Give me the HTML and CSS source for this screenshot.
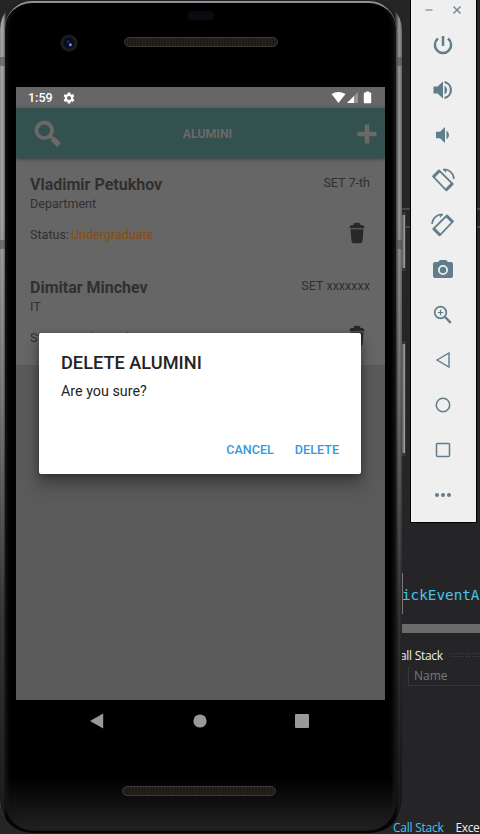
FILE: index.html
```html
<!DOCTYPE html>
<html lang="en">
<head>
<meta charset="utf-8">
<title>Alumini</title>
<link rel="stylesheet" href="styles.css">
</head>
<body>
<main class="desktop">
  <section class="ide">
    <div class="ide-band"></div>
    <div class="editor"><code>ickEventA</code></div>
    <div class="splitter"></div>
    <div class="panel-title"><span>all Stack</span><i class="grip"></i></div>
    <div class="panel-head"><span>Name</span></div>
    <div class="panel-body"></div>
    <div class="tabs"><span class="tab-on">Call Stack</span><span>Exce</span></div>
  </section>

  <section class="phone">
    <i class="side-key power-key"></i>
    <i class="side-key volume-key"></i>
    <div class="shell">
      <div class="face">
        <header class="forehead">
          <i class="sensor"></i>
          <svg class="camera" viewBox="0 0 18 18"><circle cx="9" cy="9" r="8.6" fill="#1b1b1d"/><circle cx="9" cy="9" r="5.4" fill="#08091c"/><circle cx="8" cy="7.5" r="1.5" fill="#172576"/><circle cx="10.3" cy="10.7" r="1.7" fill="#4862cf"/><circle cx="10.5" cy="11" r=".8" fill="#a9c0ff"/></svg>
          <i class="speaker"></i>
        </header>

        <div class="screen">
          <div class="status-bar">
            <span>1:59</span>
            <svg class="gear" viewBox="0 0 24 24"><path fill="#fff" fill-rule="evenodd" d="M9.500 1h5l.6 3.200 2 1.200 3.100-1.200 2.500 4.400-2.500 2v2.800l2.500 2-2.500 4.400-3.100-1.200-2 1.200-.6 3.200h-5l-.6-3.200-2-1.200-3.100 1.200-2.500-4.400 2.500-2v-2.800l-2.500-2 2.500-4.400 3.100 1.200 2-1.200zM12 8a4 4 0 1 0 0 8 4 4 0 0 0 0-8z"/></svg>
            <svg class="signals" viewBox="0 0 42 14"><path fill="#fff" d="M.5 3.100Q7.500-1.300 14.500 3.100L7.500 12z"/><path fill="#949494" d="M27 1v11H16z"/><path fill="#fff" d="M23 5v7h-7z"/><path fill="#fff" d="M35 1.500V.500h3v1h1.500q.7 0 .7.700v9.300q0 .7-.7.700h-6q-.7 0-.7-.7V2.200q0-.7.7-.7z"/></svg>
          </div>
          <div class="app-bar">
            <svg class="search" viewBox="0 0 28 28"><circle cx="10.300" cy="10.300" r="7.800" fill="none" stroke="#6c6868" stroke-width="3.800"/><path d="M16 16l2.500 2.500" stroke="#6c6868" stroke-width="3"/><path d="M18.500 18.500l6.500 6.500" stroke="#6c6868" stroke-width="5.400"/></svg>
            <h1>ALUMINI</h1>
            <svg class="plus" viewBox="0 0 20 20"><path d="M10 .5v19M.5 10h19" stroke="#6c6868" stroke-width="4.600"/></svg>
          </div>
          <div class="list">
            <article class="card">
              <div class="line"><h2>Vladimir Petukhov</h2><span>SET 7-th</span></div>
              <p>Department</p>
              <div class="line state"><p>Status:<b>Undergraduate</b></p>
                <svg class="trash" viewBox="0 0 16 22"><path fill="#282828" d="M4.500 3q0-2.300 1.800-2.300h3.400q1.800 0 1.800 2.300h2Q15.500 3.500 15.500 6.300H.5Q.5 3.500 2.500 3zM1.500 7.200h13l-1 12q-.2 2-2.200 2H4.700q-2 0-2.200-2z"/></svg></div>
            </article>
            <article class="card">
              <div class="line"><h2>Dimitar Minchev</h2><span>SET xxxxxxx</span></div>
              <p>IT</p>
              <div class="line state"><p>Status:<b class="plain">Undergraduate</b></p>
                <svg class="trash" viewBox="0 0 16 22"><path fill="#282828" d="M4.500 3q0-2.300 1.800-2.300h3.400q1.800 0 1.800 2.300h2Q15.500 3.500 15.500 6.300H.5Q.5 3.500 2.500 3zM1.500 7.200h13l-1 12q-.2 2-2.200 2H4.700q-2 0-2.200-2z"/></svg></div>
            </article>
          </div>
          <div class="dialog">
            <h3>DELETE ALUMINI</h3>
            <p>Are you sure?</p>
            <div class="actions"><button>CANCEL</button><button>DELETE</button></div>
          </div>
        </div>

        <nav class="nav">
          <svg viewBox="0 0 16 16"><path fill="#999" d="M1 8L14.200.500v15z"/></svg>
          <svg viewBox="0 0 16 16"><circle cx="8" cy="8" r="6.600" fill="#999"/></svg>
          <svg viewBox="0 0 16 16"><rect x="1" y="1" width="14" height="14" rx="1" fill="#999"/></svg>
        </nav>
        <footer class="chin"><i class="speaker"></i></footer>
      </div>
    </div>
  </section>

  <aside class="tools">
    <div class="win">
      <svg viewBox="0 0 10 10"><path d="M1.500 5h7" stroke="#8ba1ab" stroke-width="1.500"/></svg>
      <svg viewBox="0 0 10 10"><path d="M1.500 1.500l7 7m0-7l-7 7" stroke="#6a8491" stroke-width="1.400"/></svg>
    </div>
    <svg class="tool" viewBox="0 0 24 24"><g fill="none" stroke="#607d8b" stroke-width="2.500"><path d="M12 3v10M7 5.600a8.100 8.100 0 1 0 10 0"/></g></svg>
    <svg class="tool" viewBox="0 0 24 24"><path fill="#607d8b" d="M2.500 8.500h4L12 3.500v17l-5.500-5h-4z"/><path fill="#607d8b" d="M13.500 7.700a4.800 4.800 0 0 1 0 8.600z"/><path d="M13.500 4a8.200 8.200 0 0 1 0 16" fill="none" stroke="#607d8b" stroke-width="2.200"/></svg>
    <svg class="tool" viewBox="0 0 24 24"><path fill="#607d8b" d="M5 8.700h4l5-4.700v16l-5-4.700H5zM15.500 7.700a5 5 0 0 1 0 8.600z"/></svg>
    <svg class="tool" viewBox="0 0 24 24"><g fill="none" stroke="#607d8b"><path stroke-width="1.800" d="M2.200 8.500l6-6L21.500 15.800l-6.300 6.500z"/><path stroke-width="3" d="M2.500 8.800l6-6M15 22l6.500-6.500"/><path stroke-width="1.500" d="M12 1.700C18 1 22.500 5 23 11"/></g><path fill="#607d8b" d="M15.500.7L12 1l3 4z"/></svg>
    <svg class="tool flip" viewBox="0 0 24 24"><g fill="none" stroke="#607d8b"><path stroke-width="1.800" d="M2.200 8.500l6-6L21.500 15.800l-6.300 6.500z"/><path stroke-width="3" d="M2.500 8.800l6-6M15 22l6.500-6.500"/><path stroke-width="1.500" d="M12 1.700C18 1 22.500 5 23 11"/></g><path fill="#607d8b" d="M15.500.7L12 1l3 4z"/></svg>
    <svg class="tool" viewBox="0 0 24 24"><path fill="#607d8b" fill-rule="evenodd" d="M9 2h6l2 2h3q2 0 2 2v12q0 2-2 2H4q-2 0-2-2V6q0-2 2-2h3zM12 7a5 5 0 1 0 0 10 5 5 0 0 0 0-10z"/><circle cx="12" cy="12" r="3.200" fill="#607d8b"/></svg>
    <svg class="tool" viewBox="0 0 24 24"><g fill="none" stroke="#607d8b"><circle cx="9.500" cy="9.500" r="5.800" stroke-width="1.700"/><path stroke-width="1.200" d="M9.500 6.700v5.600M6.700 9.500h5.600"/><path stroke-width="2.400" d="M14 14l5.800 5.800"/></g></svg>
    <svg class="tool" viewBox="0 0 24 24"><path d="M6 12L18 5v14z" fill="none" stroke="#607d8b" stroke-width="1.400"/></svg>
    <svg class="tool" viewBox="0 0 24 24"><circle cx="12" cy="12" r="6.700" fill="none" stroke="#607d8b" stroke-width="1.500"/></svg>
    <svg class="tool" viewBox="0 0 24 24"><rect x="5.500" y="5.500" width="13" height="13" rx="1" fill="none" stroke="#607d8b" stroke-width="1.500"/></svg>
    <svg class="tool" viewBox="0 0 24 24"><g fill="#607d8b"><circle cx="6" cy="12" r="2"/><circle cx="12" cy="12" r="2"/><circle cx="18" cy="12" r="2"/></g></svg>
  </aside>
</main>
</body>
</html>
```
FILE: styles.css
```css
* { box-sizing: border-box; }
body { margin: 0; background: #252528; font-family: Roboto, sans-serif; }
h1, h2, h3, p { margin: 0; font-weight: 400; }
i { display: block; }
svg { display: block; flex: none; }

.desktop { position: relative; width: 480px; height: 834px; overflow: hidden; background: #252528; }

/* windows on the desktop */
.ide { position: absolute; inset: 0; padding-left: 402px; display: flex; flex-direction: column; font: 12px "Open Sans", sans-serif; color: #ededed; }
.ide-band { height: 20px; margin-top: 208px; border-top: 2px solid #3b4b57; border-bottom: 2px solid #3b4b57; flex: none; }
.editor { height: 41px; margin-top: 345px; border-left: 1px solid #77777a; display: flex; align-items: center; flex: none; }
.editor code { font: 14.300px/20px "DejaVu Sans Mono", monospace; color: #45c5ee; white-space: nowrap; padding-top: 2px; margin-left: -1px; }
.splitter { height: 9px; margin-top: 10px; background: #6b6b6c; flex: none; }
.panel-title { height: 34px; padding-top: 10px; display: flex; align-items: center; gap: 7px; letter-spacing: -.3px; margin-left: -2px; white-space: nowrap; }
.grip { flex: 1; height: 6px; background: radial-gradient(circle, #4a4a4d .7px, transparent .9px) 0 0 / 3px 3px; }
.panel-head { height: 19px; margin-left: 6px; padding-left: 5px; border-left: 1px solid #38383b; border-bottom: 1px solid #38383b; color: #78787a; line-height: 18px; }
.panel-body { height: 86px; border-left: 1px solid transparent; }
.tabs { height: 62px; margin-left: -9px; padding-top: 50px; display: flex; gap: 12px; letter-spacing: -.25px; line-height: 12px; white-space: nowrap; }
.tabs span:last-child { letter-spacing: -.4px; }
.tab-on { color: #45c5ee; }

.phone { position: absolute; left: 0; top: 0; width: 406px; height: 834px; }
.shell { position: relative; width: 402px; height: 833px; padding: 1px 6px 2px 5px; border-radius: 29px 30px 32px 32px; background: linear-gradient(90deg, #8a8a8a 0, #aaa 2px, #8a8a8a 4px, #222 6px, #222 395px, #5c5c5c 397px, #999 399px, #666 402px); overflow: hidden; }
.shell::before { content: ""; position: absolute; inset: 0; background: linear-gradient(transparent 0, transparent 210px, rgba(0,0,0,.25) 400px, rgba(0,0,0,.65) 610px, rgba(0,0,0,.85) 834px); }
.shell::after { content: ""; position: absolute; inset: 57px 0 auto; height: 174px; border: solid #444; border-width: 9px 0; opacity: .5; clip-path: polygon(0 0, 5px 0, 5px 100%, 0 100%, 0 0, 397px 0, 402px 0, 402px 100%, 397px 100%, 397px 0); }
.face { position: relative; height: 830px; padding: 0 11px; border-top: 2px solid #8d9095; border-radius: 27px 27px 29px 29px; background: linear-gradient(#000 0, #000 775px, #202020 825px, #151515 830px); box-shadow: inset 6px 0 4px -4px #181818, inset -6px 0 4px -4px #1c1c1f; }
.forehead { height: 84px; display: grid; grid-template-columns: 80px 1fr; }
.sensor { position: absolute; left: 182px; top: 8px; width: 27px; height: 9px; border-radius: 5px; background: #0a0b10; }
.camera { width: 18px; height: 18px; margin: 31px 0 0 44px; }
.speaker { width: 154px; height: 10px; border: 1px solid #3d3b38; border-radius: 5px; background: repeating-linear-gradient(90deg, #1e1b16 0 2px, #28241e 2px 3px); }
.forehead .speaker { margin: 34px 0 0 28px; }

.screen { width: 369px; height: 613px; background: #5a5a5a; display: flex; flex-direction: column; position: relative; color: #303030; overflow: hidden; }
.status-bar { height: 21px; padding: 0 12px; display: flex; align-items: center; background: #666; color: #fff; font-size: 12.500px; font-weight: 500; }
.gear { width: 12px; height: 12px; margin-left: 10px; }
.signals { width: 42px; height: 14px; margin-left: auto; }
.app-bar { position: relative; z-index: 1; height: 50px; padding: 1px 8px 0 18px; display: flex; align-items: center; justify-content: space-between; background: #33514f; box-shadow: 0 1px 4px rgba(0,0,0,.45); flex: none; }
.search { width: 28px; height: 28px; }
.app-bar h1 { font-size: 12.300px; font-weight: 700; color: #6c6868; margin-left: -4px; }
.plus { width: 20px; height: 20px; }
.list { height: 207px; background: #666; display: flex; flex-direction: column; padding: 17px 15px 0 14px; font-size: 12.550px; flex: none; }
.card { height: 103px; flex: none; }
.line { display: flex; justify-content: space-between; }
.line h2 { font-size: 16px; font-weight: 700; line-height: 20px; }
.line span { line-height: 16px; }
.card > p { line-height: 18px; }
.state { height: 24px; margin-top: 9px; align-items: center; padding-right: 5px; }
.state b { color: #8e4a06; font-weight: 400; margin-left: 2px; }
.state .plain { color: #303030; }
.trash { width: 16px; height: 22px; margin-top: -2px; }

.dialog { position: absolute; left: 23px; top: 246px; z-index: 2; width: 322px; height: 141px; padding: 19px 14px 9px 22px; border-radius: 2px; background: #fff; color: #242424; box-shadow: 0 10px 16px rgba(0,0,0,.32), 0 2px 7px rgba(0,0,0,.28); display: flex; flex-direction: column; }
.dialog h3 { font-size: 18.200px; font-weight: 500; line-height: 22px; }
.dialog p { font-size: 14.300px; line-height: 20px; margin-top: 7px; }
.actions { display: flex; justify-content: flex-end; gap: 5px; margin-top: auto; }
.actions button { border: 0; padding: 0 8px; height: 32px; background: none; color: #3699df; font: 500 12.600px Roboto, sans-serif; }

.nav { height: 43px; display: flex; justify-content: space-between; align-items: center; padding: 0 75px 1px 73px; }
.nav svg { width: 16px; height: 16px; }
.chin { padding: 43px 0 0 106px; }

.side-key { position: absolute; left: 401px; width: 5px; border: solid #353535; border-width: 3px 1px; background: linear-gradient(90deg, #555, #aaa); }
.power-key { top: 212px; height: 59px; }
.volume-key { top: 341px; height: 115px; }

.tools { position: absolute; left: 410px; top: -1px; width: 67px; height: 524px; border: 1px solid #000; background: #efefef; display: flex; flex-direction: column; align-items: center; }
.win { width: 100%; height: 20px; padding: 0 14px 0 13px; display: flex; align-items: center; justify-content: space-between; }
.win svg { width: 10px; height: 10px; }
.tool { width: 24px; height: 24px; margin: 13px 1px 8px 0; }
.flip { transform: scaleX(-1); }
```
